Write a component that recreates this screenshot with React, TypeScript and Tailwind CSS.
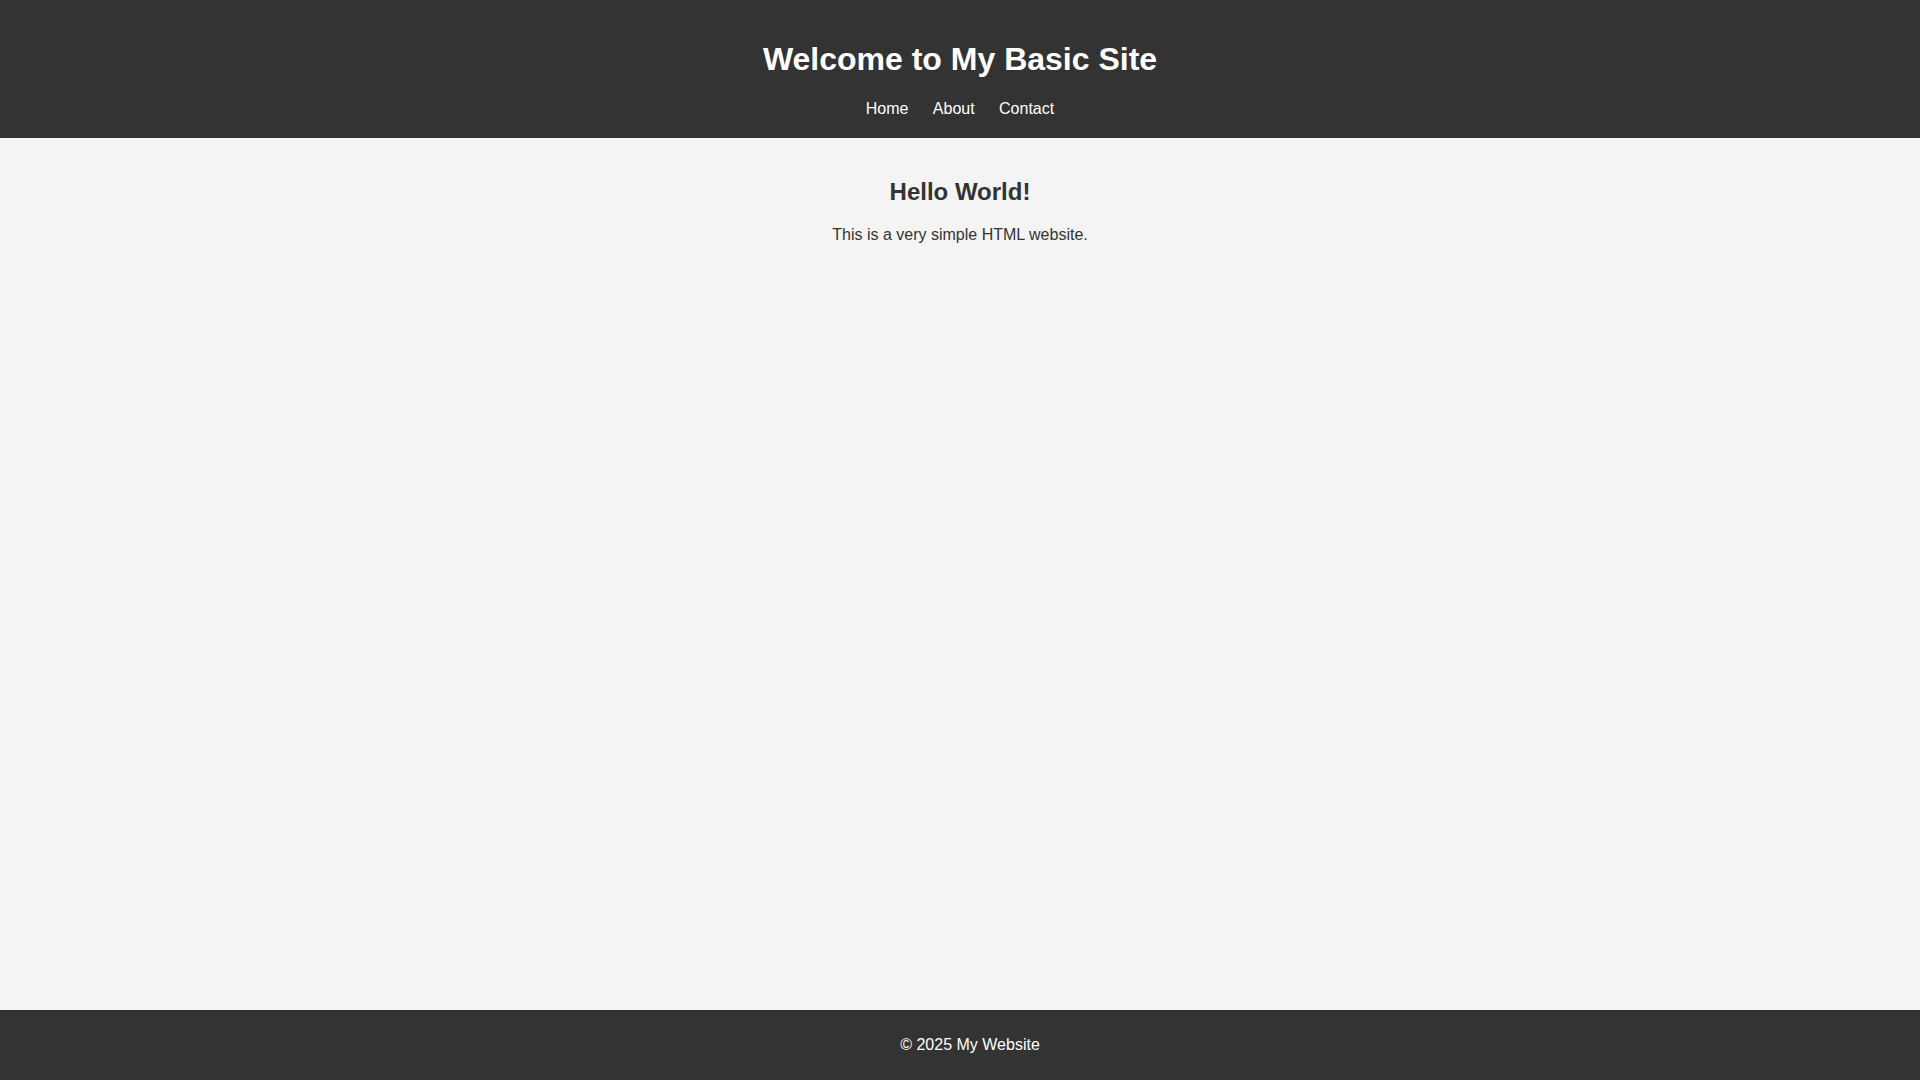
import React, { JSX } from 'react';

/**
 * BasicSite
 * Dark header with title + nav, light main area, dark footer.
 */
export default function App(): JSX.Element {
  const links = ['Home', 'About', 'Contact'];

  return (
    <div className="min-h-screen flex flex-col bg-[#f4f4f4] text-[#333] font-['Liberation_Sans',Arial,sans-serif] text-[16px] leading-[normal]">
      {/* Header */}
      <header className="bg-[#333] text-white text-center py-[20px]">
        <h1 className="text-[32px] font-bold my-[21.44px] leading-[normal]">Welcome to My Basic Site</h1>
        <nav className="flex justify-center gap-[24.4px]">
          {links.map((l) => (
            <a key={l} href="#" className="text-white no-underline">
              {l}
            </a>
          ))}
        </nav>
      </header>

      {/* Main */}
      <main className="flex-1 text-center p-[20px]">
        <h2 className="text-[24px] font-bold mt-[19.92px] mb-[19.92px] leading-[normal]">Hello World!</h2>
        <p>This is a very simple HTML website.</p>
      </main>

      {/* Footer */}
      <footer className="bg-[#333] text-white text-center py-[10px] pl-[20px]">
        <p className="my-[16px]">© 2025 My Website</p>
      </footer>
    </div>
  );
}
